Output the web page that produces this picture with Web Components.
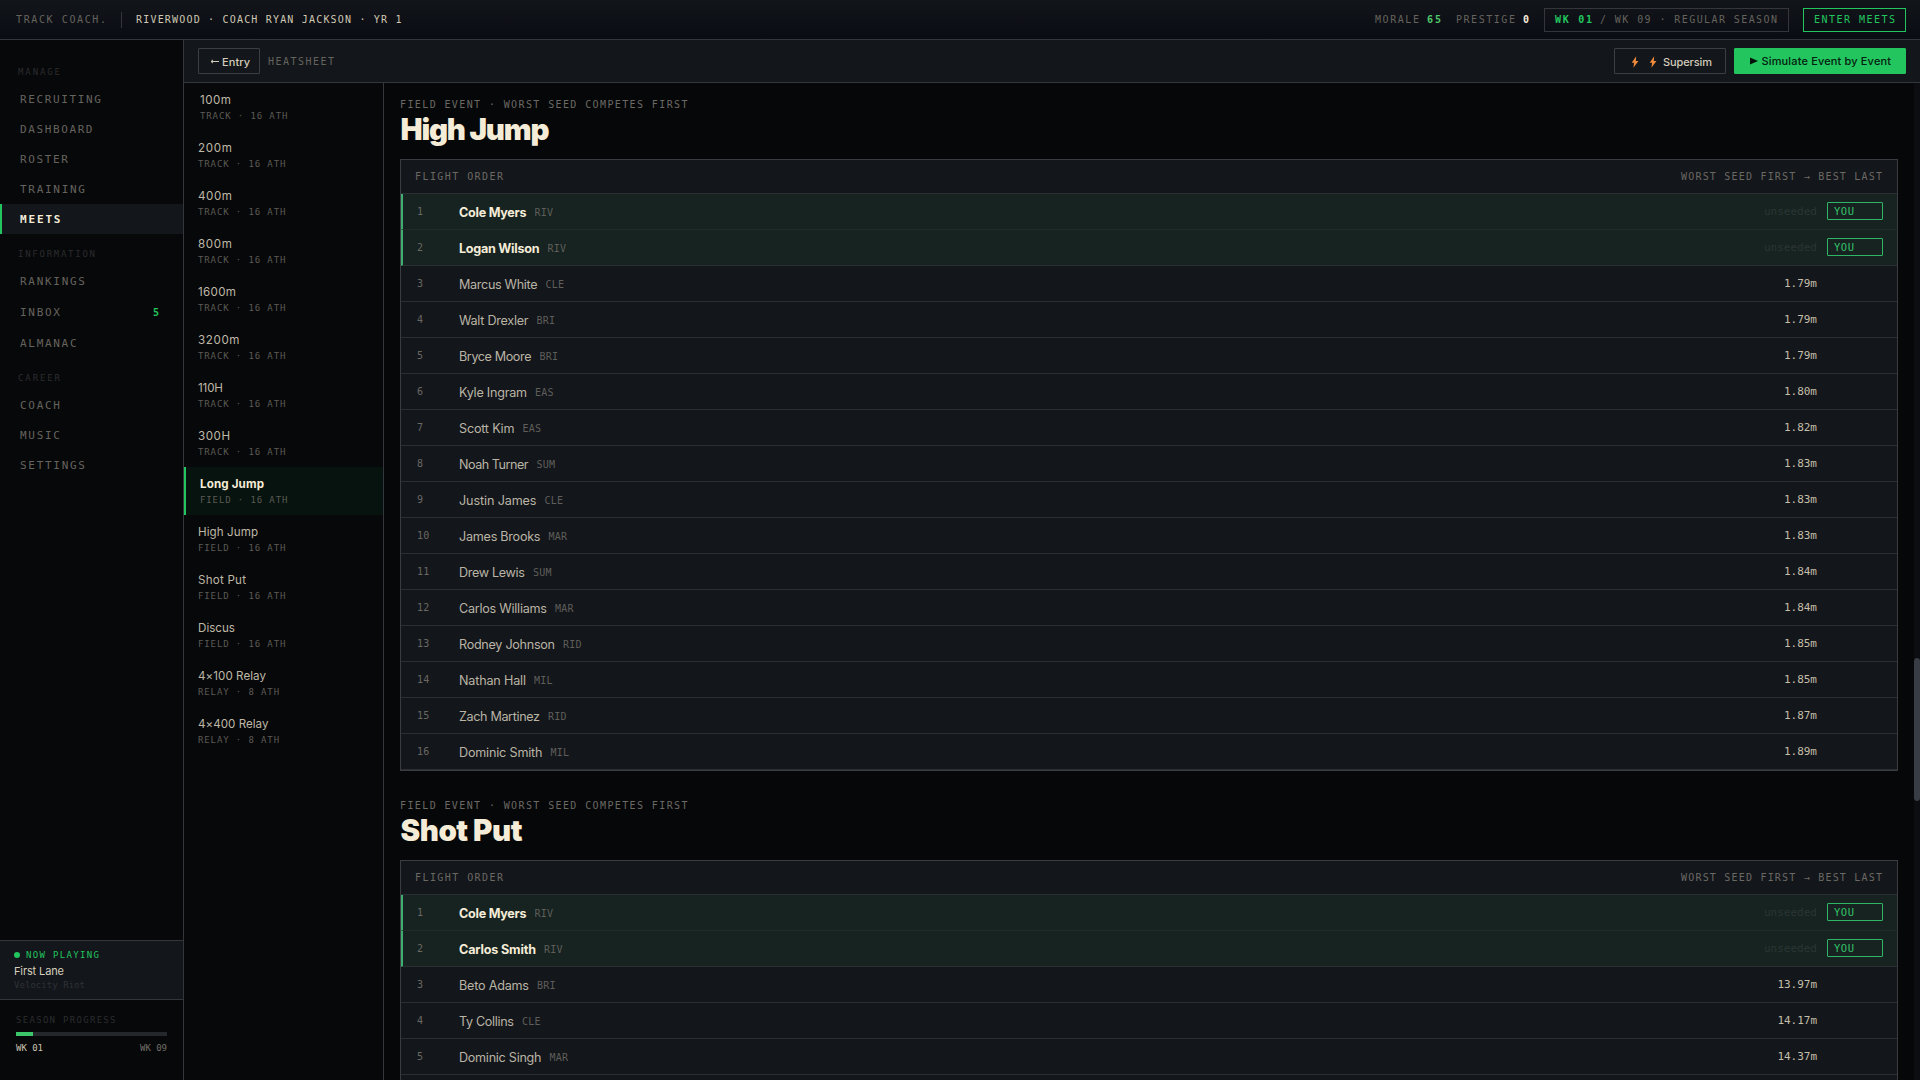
<!DOCTYPE html>
<html lang="en">
<head>
<meta charset="utf-8">
<title>Track Coach</title>
<style>
html,body{margin:0;height:100%;overflow:hidden;background:#060709}
body{
  --bg:#060709;--panel:#13161b;--line:#34363b;--row:#2b2e33;--cream:#f5ecd8;--soft:#b9b3a3;--mute:#65635d;--dim:#2b2c2e;--green:#22c55e;
  --mono:"DejaVu Sans Mono","Liberation Mono",monospace;--sans:Inter,"Liberation Sans",sans-serif;
  font-family:var(--sans);color:var(--soft)}
</style>
</head>
<body>
<coach-app></coach-app>
<script>
const define=(name,render)=>customElements.define(name,class extends HTMLElement{
  connectedCallback(){
    if(this.shadowRoot)return;
    this.attachShadow({mode:'open'}).innerHTML=render(this);
  }
});

/* A single line of text tracked out to a given width. */
customElements.define('fit-text',class extends HTMLElement{
  connectedCallback(){
    if(this.shadowRoot)return;
    const root=this.attachShadow({mode:'open'});
    root.innerHTML='<style>:host{display:inline-block;white-space:pre;flex:none}span{display:inline-block}</style><span><slot></slot></span>';
    const w=+this.getAttribute('w'),s=root.querySelector('span'),n=this.textContent.length;
    if(!w||n<2)return;
    const ls=(w-s.getBoundingClientRect().width)/(n-1);
    s.style.letterSpacing=ls+'px';
    s.style.marginRight=-ls+'px';
  }
});
const t=(text,w,cls='')=>`<fit-text class="${cls}" w="${w}">${text}</fit-text>`;

define('nav-group',el=>`<style>:host{display:block;height:32px;box-sizing:border-box;padding:13px 0 0 18px;font:9px/14px var(--mono);color:var(--dim)}</style>${t(el.getAttribute('label'),el.getAttribute('w'))}`);

define('nav-item',el=>`<style>
:host{display:flex;align-items:center;height:30px;box-sizing:border-box;padding:2px 24px 0 18px;border-left:2px solid transparent;font:11px/14px var(--mono);color:var(--mute);justify-content:space-between}
:host([badge]){height:32px}
:host([active]){background:var(--panel);border-color:var(--green);color:var(--cream);font-weight:700}
b{color:var(--green);font-size:10px}
</style>${t(el.getAttribute('label'),el.getAttribute('w'))}${el.hasAttribute('badge')?`<b>${el.getAttribute('badge')}</b>`:''}`);

define('top-bar',()=>`<style>
:host{display:flex;align-items:center;height:40px;box-sizing:border-box;border-bottom:1px solid var(--line);background:linear-gradient(#12151a,#0a0c13);padding:0 14px 0 16px;font:10px/14px var(--mono);color:var(--mute)}
i{width:1px;height:16px;background:var(--line);margin:0 14px 0 15px}
.c{color:#cfc8b3}.sp{flex:1}
.g{color:#4ec96b;font-weight:700}.w{color:var(--cream);font-weight:700}
.box{display:flex;box-sizing:border-box;height:24px;align-items:center;border:1px solid var(--line);justify-content:space-between}
.wk{width:245px;padding:0 11px 0 10px;margin:0 14px 0 15px}
.wk .k{color:var(--green);font-weight:700}
.em{width:103px;border-color:var(--green);color:var(--green);padding:0 10px}
.m{margin-right:8px}.p{margin:0 8px 0 15px}
</style>${t('TRACK COACH.',90)}<i></i>${t('RIVERWOOD · COACH RYAN JACKSON · YR 1',265.5,'c')}<span class="sp"></span>
${t('MORALE',44,'m')}${t('65',14,'g')}${t('PRESTIGE',59,'p')}<b class="w">0</b>
<div class="box wk">${t('WK 01',37,'k')}${t('/ WK 09 · REGULAR SEASON',177)}</div><div class="box em">${t('ENTER MEETS',81)}</div>`);

define('side-nav',()=>`<style>
:host{display:flex;flex-direction:column;width:184px;box-sizing:border-box;border-right:1px solid var(--line);flex:none;background:#07080a}
nav{padding-top:12px;flex:1}
.np{height:60px;box-sizing:border-box;border-top:1px solid var(--line);border-bottom:1px solid var(--line);background:var(--panel);padding:7px 14px;display:flex;flex-direction:column}
.h{display:flex;align-items:center;gap:6px;color:var(--green);font:9px/14px var(--mono)}
.h i{width:6px;height:6px;border-radius:50%;background:var(--green)}
.s{font:11px/17px var(--sans);color:#d6cfbd;padding-top:1px}
.a{font:9px/12px var(--mono);color:#303236;margin-top:-1px}
.se{height:80px;box-sizing:border-box;padding:13px 16px 0;font:9px/14px var(--mono);color:var(--dim)}
.bar{height:4px;background:#24272c;margin:5px 0;display:flex}.bar i{width:17px;background:#3cc56b}
.w{display:flex;justify-content:space-between;color:#716e66}.w .n{color:#c9c2b0}
</style><nav>
<nav-group label="MANAGE" w="42"></nav-group>
<nav-item label="RECRUITING" w="81"></nav-item><nav-item label="DASHBOARD" w="72.5"></nav-item><nav-item label="ROSTER" w="48"></nav-item><nav-item label="TRAINING" w="65"></nav-item><nav-item active label="MEETS" w="40.5"></nav-item>
<nav-group label="INFORMATION" w="77"></nav-group>
<nav-item label="RANKINGS" w="65"></nav-item><nav-item label="INBOX" badge="5" w="40"></nav-item><nav-item label="ALMANAC" w="56.5"></nav-item>
<nav-group label="CAREER" w="42"></nav-group>
<nav-item label="COACH" w="40"></nav-item><nav-item label="MUSIC" w="40"></nav-item><nav-item label="SETTINGS" w="65"></nav-item>
</nav>
<div class="np"><div class="h"><i></i>${t('NOW PLAYING',73)}</div><div class="s">${t('First Lane',50)}</div><div class="a">${t('Velocity Riot',71)}</div></div>
<div class="se">${t('SEASON PROGRESS',99.5)}<div class="bar"><i></i></div><div class="w">${t('WK 01',27,'n')}${t('WK 09',27)}</div></div>`);

define('tool-bar',()=>`<style>
:host{display:flex;align-items:center;height:43px;flex:none;box-sizing:border-box;border-bottom:1px solid var(--line);background:var(--panel);padding:0 14px}
.b{display:flex;align-items:center;height:26px;box-sizing:border-box;border:1px solid #3b3e43;border-radius:1px;font:500 11px/14px var(--sans);color:#d3ccba}
.e{width:62px;padding:1px 0 0 11px;gap:3px;margin-right:8px}
.h{font:10px/14px var(--mono);color:var(--mute);padding-top:2px}
.sp{flex:1}
.s{width:112px;margin-right:8px;padding:1px 0 0 16px}
.s svg{margin-right:9.5px}.s svg+svg{margin-right:6.5px}
.g{width:172px;background:#22c55e;border-color:#22c55e;color:#05200f;padding-left:15px;gap:3.5px}
</style><div class="b e"><svg width="9" height="7" viewBox="0 0 9 7"><path d="M9 3.5H1.2M3 1.9L1 3.5l2 1.6" fill="none" stroke="#d3ccba" stroke-width="1"/></svg>${t('Entry',28)}</div>${t('HEATSHEET',66,'h')}<span class="sp"></span>
<div class="b s">${'<svg width="8" height="12" viewBox="0 0 8 12"><path d="M5.2.3L.7 6.7h2.4L2.4 11.7 7.4 5H4.8z" fill="#f28a3c"/></svg>'.repeat(2)}${t('Supersim',49)}</div>
<div class="b g"><svg width="8" height="8" viewBox="0 0 8 8"><path d="M0 .5L8 4 0 7.5z" fill="#031208"/></svg>${t('Simulate Event by Event',129.5)}</div>`);

define('event-item',el=>`<style>
:host{display:flex;flex-direction:column;height:48px;box-sizing:border-box;padding:9px 0 0 14px}
:host([inset]){padding-left:16px}
:host([active]){border-left:2px solid var(--green);background:#06130e}
.n{font:11.6px/17px var(--sans);color:#bfb8a7}
:host([active]) .n{font-weight:700;color:var(--cream)}
.s{font:9px/14px var(--mono);color:#5c5a55}
</style><div class="n">${t(el.getAttribute('name'),el.getAttribute('w'))}</div><div class="s">${t(el.getAttribute('sub'),el.getAttribute('sub').length*6.3-.8)}</div>`);

define('event-list',()=>{
  const T='TRACK · 16 ATH',F='FIELD · 16 ATH',R='RELAY · 8 ATH';
  return `<style>:host{display:block;width:200px;box-sizing:border-box;border-right:1px solid var(--line);flex:none;background:#07080a}</style>`+
  [['100m',31,T,'inset'],['200m',34,T],['400m',34,T],['800m',34,T],['1600m',38,T],['3200m',41.5,T],['110H',25,T],['300H',32,T],['Long Jump',64,F,'active'],['High Jump',60,F],['Shot Put',48,F],['Discus',37,F],['4×100 Relay',68,R],['4×400 Relay',70.5,R]]
  .map(([n,w,s,a=''])=>`<event-item ${a} name="${n}" w="${w}" sub="${s}"></event-item>`).join('');
});

define('flight-row',el=>{
  const g=k=>el.getAttribute(k),you=el.hasAttribute('you');
  return `<style>
:host{display:flex;align-items:center;height:36px;box-sizing:border-box;border-bottom:1px solid var(--row);padding:0 14px 0 16px}
:host([you]){background:#162320;border-bottom-color:#1e2b28;border-left:2px solid #3fae70;padding-left:14px}
:host([last]){border-bottom-color:var(--row)}
.i{width:42px;font:10px/14px var(--mono);color:#6a6862}
.n{font:12.6px/18px var(--sans);color:#bab4a5;padding-top:3px}
:host([you]) .n{font-weight:700;color:var(--cream)}
.t{font:10px/14px var(--mono);color:#5f5e5a;margin-left:8px;padding-top:3px;flex:1}
.v{font:11px/14px var(--mono);color:#c5bea9;margin-right:66px}
.u{font:11px/14px var(--mono);color:#2b3534;margin-right:10px}
.y{display:flex;align-items:center;width:56px;height:18px;box-sizing:border-box;border:1px solid #2fb565;border-radius:1px;padding:0 0 0 6px;margin-bottom:1px;font:10.5px/14px var(--mono);color:#37c06b}
</style><span class="i">${t(g('i'),g('i').length*6.2)}</span>${t(g('name'),g('w'),'n')}<span class="t">${t(g('team'),18.5)}</span>`+
  (you?`${t('unseeded',53,'u')}<span class="y">${t('YOU',20)}</span>`:t(g('mark'),g('mark').length*6.6,'v'));
});

define('flight-card',el=>{
  const rows=FLIGHTS[el.getAttribute('event')];
  return `<style>
:host{display:block;margin-bottom:27px}
.e{height:15px;font:10px/15px var(--mono);color:#6b6963}
.h{height:35px;font:900 29.5px/35px var(--sans);color:var(--cream);margin-bottom:12px;padding-left:.5px}
.c{border:1px solid #3a3c41;background:var(--panel)}
:host([more]) .c{padding-bottom:36px}
.f{display:flex;justify-content:space-between;align-items:center;height:34px;box-sizing:border-box;border-bottom:1px solid var(--row);padding:0 15px 0 14px;font:10px/14px var(--mono);color:#6b6963}
</style><div class="e">${t('FIELD EVENT · WORST SEED COMPETES FIRST',287.5)}</div><div class="h">${t(el.getAttribute('event'),el.getAttribute('w'))}</div>
<div class="c"><div class="f">${t('FLIGHT ORDER',88)}${t('WORST SEED FIRST → BEST LAST',201)}</div>${rows.map(([n,w,team,mark],i)=>`<flight-row ${mark?'':'you'} ${i==1?'last':''} i="${i+1}" name="${n}" w="${w}" team="${team}" mark="${mark||''}"></flight-row>`).join('')}</div>`;
});

const FLIGHTS={
'High Jump':[['Cole Myers',67.5,'RIV'],['Logan Wilson',80.5,'RIV'],['Marcus White',78.5,'CLE','1.79m'],['Walt Drexler',69.5,'BRI','1.79m'],['Bryce Moore',72.5,'BRI','1.79m'],['Kyle Ingram',68,'EAS','1.80m'],['Scott Kim',55.5,'EAS','1.82m'],['Noah Turner',69.5,'SUM','1.83m'],['Justin James',77.5,'CLE','1.83m'],['James Brooks',81.5,'MAR','1.83m'],['Drew Lewis',66,'SUM','1.84m'],['Carlos Williams',88,'MAR','1.84m'],['Rodney Johnson',96,'RID','1.85m'],['Nathan Hall',67,'MIL','1.85m'],['Zach Martinez',81,'RID','1.87m'],['Dominic Smith',83.5,'MIL','1.89m']],
'Shot Put':[['Cole Myers',67.5,'RIV'],['Carlos Smith',77,'RIV'],['Beto Adams',70,'BRI','13.97m'],['Ty Collins',55,'CLE','14.17m'],['Dominic Singh',82.5,'MAR','14.37m']]
};

define('coach-app',()=>`<style>
:host{display:flex;flex-direction:column;width:1920px;height:1080px;overflow:hidden;background:var(--bg)}
.b{display:flex;flex:1;min-height:0}.m{display:flex;flex-direction:column;flex:1;min-width:0}
main{flex:1;padding:14px 16px 0;overflow:hidden;min-width:0}
.sb{width:6px;background:#0b0d11;padding-top:575px;box-sizing:border-box}.sb i{display:block;height:143px;border-radius:3px;background:#383c44}
</style><top-bar></top-bar><div class="b"><side-nav></side-nav><div class="m"><tool-bar></tool-bar><div class="b"><event-list></event-list><main><flight-card event="High Jump" w="149"></flight-card><flight-card more event="Shot Put" w="122"></flight-card></main><div class="sb"><i></i></div></div></div></div>`);
</script>
</body>
</html>
